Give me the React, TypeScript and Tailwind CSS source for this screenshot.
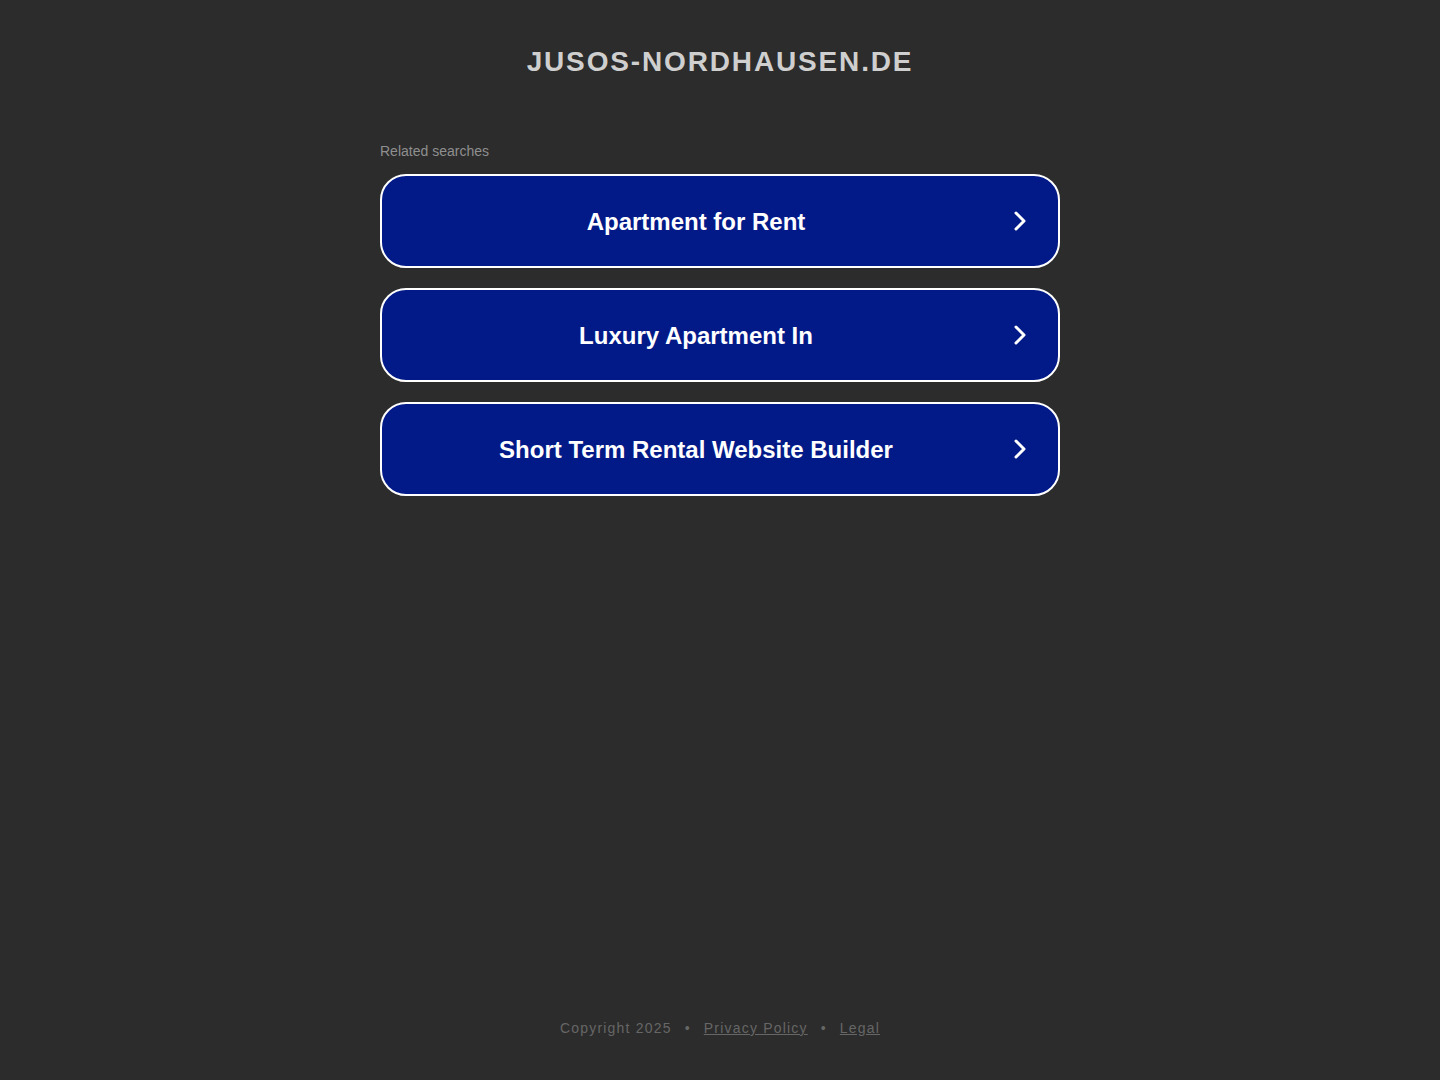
import React from "react";

const items = ["Apartment for Rent", "Luxury Apartment In", "Short Term Rental Website Builder"];

function Chevron() {
  return (
    <svg width="14" height="22" viewBox="0 0 14 22" fill="none">
      <path d="M3 3 L11 11 L3 19" stroke="white" strokeWidth="3" strokeLinecap="round" strokeLinejoin="round" />
    </svg>
  );
}

export default function App() {
  return (
    <div className="min-h-screen h-[1080px] bg-[#2c2c2c] flex flex-col items-center font-['Liberation_Sans',Arial,sans-serif]">
      <div className="pt-[41px] h-[82px] text-[28px] leading-[42px] font-bold tracking-[1.85px] text-[#cfcfcf]">
        JUSOS-NORDHAUSEN.DE
      </div>
      <div className="w-[680px] mt-[60px]">
        <div className="text-[14px] leading-[18px] text-[#8f8f8f]">Related searches</div>
        <div className="mt-[14px] flex flex-col gap-[20px]">
          {items.map((t) => (
            <div
              key={t}
              className="h-[94px] rounded-[26px] border-2 border-white bg-[#021a88] flex items-center"
            >
              <span className="flex-1 text-center text-[24px] font-bold text-white pt-[2px]">{t}</span>
              <span className="w-[20px] mr-[28px] flex justify-center">
                <Chevron />
              </span>
            </div>
          ))}
        </div>
      </div>
      <div className="mt-auto pb-[42px] text-[14px] leading-[20px] tracking-[1.2px] text-[#666666] flex items-center gap-[13px]">
        <span>Copyright 2025</span>
        <span>•</span>
        <a className="underline">Privacy Policy</a>
        <span>•</span>
        <a className="underline">Legal</a>
      </div>
    </div>
  );
}
